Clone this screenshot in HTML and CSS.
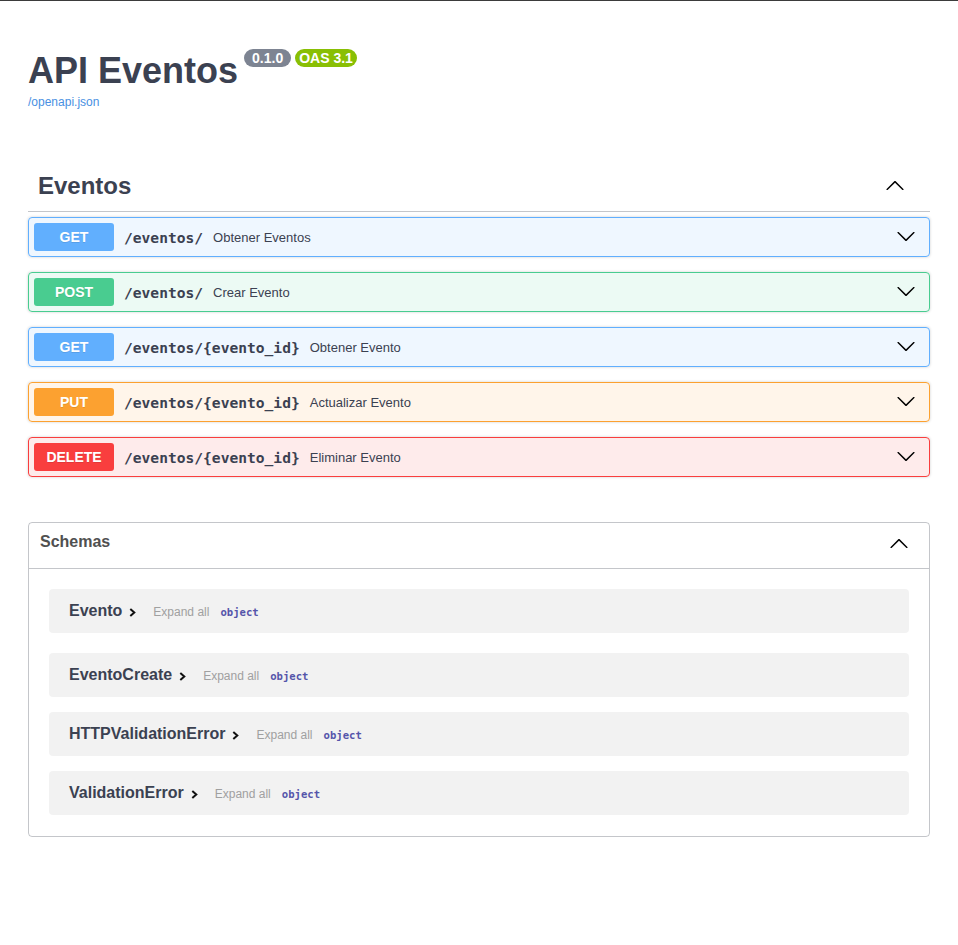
FILE: index.html
```html
<!DOCTYPE html>
<html lang="es">
<head>
<meta charset="utf-8">
<title>API Eventos</title>
<link rel="stylesheet" href="styles.css">
</head>
<body>
<div class="wrapper">
  <section class="info">
    <div class="title-row">
      <h2 class="title">API Eventos</h2>
      <span class="pill pill-version">0.1.0</span>
      <span class="pill pill-oas">OAS 3.1</span>
    </div>
    <a class="spec-link" href="#">/openapi.json</a>
  </section>

  <section class="tag-section">
    <div class="tag">
      <h3>Eventos</h3>
      <svg class="arrow-up" width="20" height="20" viewBox="0 0 20 20"><path d="M17.418 14.908c.272.268.709.268.979 0s.271-.701 0-.969l-7.908-7.83c-.27-.268-.707-.268-.979 0l-7.908 7.83c-.27.268-.27.701 0 .969.271.268.709.268.979 0L10 7.767l7.418 7.141z"/></svg>
    </div>
    <div class="op-list">
      <div class="opblock op-get">
        <span class="method">GET</span>
        <span class="path">/eventos/</span>
        <span class="summary">Obtener Eventos</span>
        <svg class="op-arrow" width="20" height="20" viewBox="0 0 20 20"><path d="M17.418 6.109c.272-.268.709-.268.979 0s.271.701 0 .969l-7.908 7.83c-.27.268-.707.268-.979 0l-7.908-7.83c-.27-.268-.27-.701 0-.969.271-.268.709-.268.979 0L10 13.25l7.418-7.141z"/></svg>
      </div>
      <div class="opblock op-post">
        <span class="method">POST</span>
        <span class="path">/eventos/</span>
        <span class="summary">Crear Evento</span>
        <svg class="op-arrow" width="20" height="20" viewBox="0 0 20 20"><path d="M17.418 6.109c.272-.268.709-.268.979 0s.271.701 0 .969l-7.908 7.83c-.27.268-.707.268-.979 0l-7.908-7.83c-.27-.268-.27-.701 0-.969.271-.268.709-.268.979 0L10 13.25l7.418-7.141z"/></svg>
      </div>
      <div class="opblock op-get">
        <span class="method">GET</span>
        <span class="path">/eventos/{evento_id}</span>
        <span class="summary">Obtener Evento</span>
        <svg class="op-arrow" width="20" height="20" viewBox="0 0 20 20"><path d="M17.418 6.109c.272-.268.709-.268.979 0s.271.701 0 .969l-7.908 7.83c-.27.268-.707.268-.979 0l-7.908-7.83c-.27-.268-.27-.701 0-.969.271-.268.709-.268.979 0L10 13.25l7.418-7.141z"/></svg>
      </div>
      <div class="opblock op-put">
        <span class="method">PUT</span>
        <span class="path">/eventos/{evento_id}</span>
        <span class="summary">Actualizar Evento</span>
        <svg class="op-arrow" width="20" height="20" viewBox="0 0 20 20"><path d="M17.418 6.109c.272-.268.709-.268.979 0s.271.701 0 .969l-7.908 7.83c-.27.268-.707.268-.979 0l-7.908-7.83c-.27-.268-.27-.701 0-.969.271-.268.709-.268.979 0L10 13.25l7.418-7.141z"/></svg>
      </div>
      <div class="opblock op-delete">
        <span class="method">DELETE</span>
        <span class="path">/eventos/{evento_id}</span>
        <span class="summary">Eliminar Evento</span>
        <svg class="op-arrow" width="20" height="20" viewBox="0 0 20 20"><path d="M17.418 6.109c.272-.268.709-.268.979 0s.271.701 0 .969l-7.908 7.83c-.27.268-.707.268-.979 0l-7.908-7.83c-.27-.268-.27-.701 0-.969.271-.268.709-.268.979 0L10 13.25l7.418-7.141z"/></svg>
      </div>
    </div>
  </section>

  <section class="models">
    <div class="models-head">
      <h4>Schemas</h4>
      <svg class="arrow-up models-arrow" width="20" height="20" viewBox="0 0 20 20"><path d="M17.418 14.908c.272.268.709.268.979 0s.271-.701 0-.969l-7.908-7.83c-.27-.268-.707-.268-.979 0l-7.908 7.83c-.27.268-.27.701 0 .969.271.268.709.268.979 0L10 7.767l7.418 7.141z"/></svg>
    </div>
    <div class="models-body">
      <div class="model model-first">
        <span class="model-name">Evento</span>
        <svg class="model-toggle" width="7" height="9" viewBox="0 0 7 9"><polyline points="1.3,1 5.3,4.5 1.3,8"/></svg>
        <span class="expand">Expand all</span>
        <span class="type">object</span>
      </div>
      <div class="model">
        <span class="model-name">EventoCreate</span>
        <svg class="model-toggle" width="7" height="9" viewBox="0 0 7 9"><polyline points="1.3,1 5.3,4.5 1.3,8"/></svg>
        <span class="expand">Expand all</span>
        <span class="type">object</span>
      </div>
      <div class="model">
        <span class="model-name">HTTPValidationError</span>
        <svg class="model-toggle" width="7" height="9" viewBox="0 0 7 9"><polyline points="1.3,1 5.3,4.5 1.3,8"/></svg>
        <span class="expand">Expand all</span>
        <span class="type">object</span>
      </div>
      <div class="model">
        <span class="model-name">ValidationError</span>
        <svg class="model-toggle" width="7" height="9" viewBox="0 0 7 9"><polyline points="1.3,1 5.3,4.5 1.3,8"/></svg>
        <span class="expand">Expand all</span>
        <span class="type">object</span>
      </div>
    </div>
  </section>
</div>
</body>
</html>
```

FILE: styles.css
```css
body {
  margin: 0;
  border-top: 1px solid #3b3b3b;
  background: #fff;
  color: #3b4151;
  font-family: "Liberation Sans", Arial, sans-serif;
}

.wrapper {
  padding: 0 28px;
}

/* info */
.info {
  padding-top: 49px;
  margin-bottom: 54px;
}

.title-row {
  display: flex;
  align-items: flex-start;
}

.title {
  margin: 0;
  font-size: 36px;
  line-height: 42px;
  font-weight: 700;
  color: #3b4151;
}

.pill {
  margin-top: -1px;
  padding: 2px 4px;
  border-radius: 57px;
  font-size: 14px;
  line-height: 14px;
  font-weight: 700;
  color: #fff;
}

.pill-version {
  background: #7d8492;
  margin-left: 6px;
  padding: 2px 8px;
}

.pill-oas {
  background: #89bf04;
  margin-left: 4px;
}

.spec-link {
  display: block;
  margin-top: 3px;
  font-size: 12px;
  line-height: 14px;
  color: #4990e2;
  text-decoration: none;
}

/* tag section */
.tag {
  display: flex;
  align-items: center;
  justify-content: space-between;
  box-sizing: border-box;
  height: 49px;
  padding: 0 25px 3px 10px;
  margin-bottom: 5px;
  border-bottom: 1px solid rgba(59, 65, 81, 0.3);
}

.tag h3 {
  margin: 0;
  font-size: 24px;
  font-weight: 700;
  color: #3b4151;
}

.arrow-up {
  display: block;
  fill: #000;
}

.tag .arrow-up {
  margin-top: -2px;
}

.op-list {
  display: flex;
  flex-direction: column;
  gap: 15px;
}

.opblock {
  display: flex;
  align-items: center;
  padding: 5px;
  border: 1px solid;
  border-radius: 4px;
  box-shadow: 0 0 3px rgba(0, 0, 0, 0.19);
}

.method {
  min-width: 80px;
  padding: 6px 0;
  border-radius: 3px;
  font-size: 14px;
  line-height: 16px;
  font-weight: 700;
  text-align: center;
  color: #fff;
  text-shadow: 0 1px 0 rgba(0, 0, 0, 0.1);
}

.path {
  padding: 0 10px;
  font-family: "DejaVu Sans Mono", "Liberation Mono", monospace;
  font-size: 14.6px;
  font-weight: 700;
  color: #3b4151;
}

.summary {
  flex: 1;
  font-size: 13px;
  color: #3b4151;
}

.op-arrow {
  display: block;
  margin-right: 8px;
  margin-top: -3px;
  fill: #000;
}

.op-get {
  background: rgba(97, 175, 254, 0.1);
  border-color: #61affe;
}
.op-get .method { background: #61affe; }

.op-post {
  background: rgba(73, 204, 144, 0.1);
  border-color: #49cc90;
}
.op-post .method { background: #49cc90; }

.op-put {
  background: rgba(252, 161, 48, 0.1);
  border-color: #fca130;
}
.op-put .method { background: #fca130; }

.op-delete {
  background: rgba(249, 62, 62, 0.1);
  border-color: #f93e3e;
}
.op-delete .method { background: #f93e3e; }

/* models */
.models {
  margin-top: 45px;
  border: 1px solid rgba(59, 65, 81, 0.3);
  border-radius: 4px;
}

.models-head {
  display: flex;
  align-items: flex-start;
  justify-content: space-between;
  padding: 10px 20px 17px 11px;
  border-bottom: 1px solid rgba(59, 65, 81, 0.3);
}

.models-head h4 {
  margin: 0;
  font-size: 16px;
  line-height: 18px;
  font-weight: 700;
  color: #505050;
}

.models-arrow {
  margin-bottom: -2px;
}

.models-body {
  display: flex;
  flex-direction: column;
  gap: 15px;
  padding: 20px 20px 21px;
}

.model {
  display: flex;
  align-items: baseline;
  box-sizing: border-box;
  height: 44px;
  padding: 13px 20px 0;
  border-radius: 4px;
  background: rgba(0, 0, 0, 0.05);
}

.model-first {
  margin-bottom: 5px;
}

.model-name {
  font-size: 16px;
  font-weight: 700;
  color: #3b4151;
}

.model-toggle {
  display: block;
  margin-left: 7px;
  position: relative;
  top: 1px;
  fill: none;
  stroke: #111;
  stroke-width: 2;
}

.expand {
  margin-left: 17px;
  font-size: 12px;
  color: #a0a0a0;
}

.type {
  margin-left: 11px;
  font-family: "DejaVu Sans Mono", "Liberation Mono", monospace;
  font-size: 10.6px;
  font-weight: 700;
  color: #55a;
}
```
